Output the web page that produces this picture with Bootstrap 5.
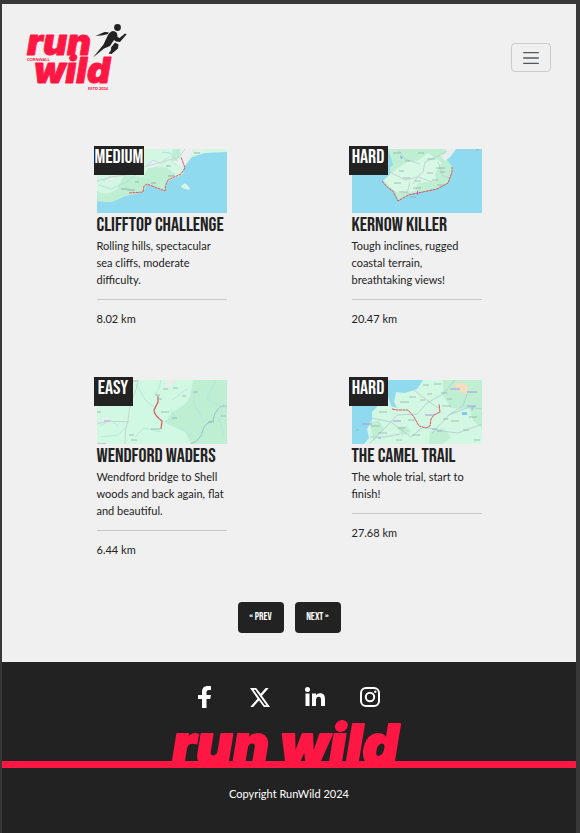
<!DOCTYPE html>
<html lang="en">
<head>
<meta charset="utf-8">
<meta name="viewport" content="width=device-width, initial-scale=1">
<title>Run Wild Cornwall</title>
<link href="https://cdn.jsdelivr.net/npm/bootstrap@5.3.0/dist/css/bootstrap.min.css" rel="stylesheet">
<style>
:root { --ink: #222; --pink: #ff1744; --paper: #f0f0f0; }
body { font-family: Lato, sans-serif; font-size: 11px; line-height: 17px; color: var(--ink); background: #383838; }
.frame { min-height: 100vh; padding: 4px 4px 4px 2px; }
.sheet { background: var(--paper); }
.site-nav { padding: 16px 25px 20px 23px; }
.navbar-brand svg { display: block; overflow: visible; }
.navbar-toggler { width: 40px; height: 29px; padding: 0; border-radius: 4px; line-height: 1; }
.navbar-toggler-icon { width: 20px; height: 20px; }
.heavy { font-family: Inter, sans-serif; font-weight: 900; font-style: italic; fill: var(--pink); stroke: var(--pink); stroke-linejoin: round; }
.micro { font-family: Lato, sans-serif; font-weight: 900; fill: var(--pink); font-size: 4px; }
.poster { font-family: "Bebas Neue", "Roboto Condensed", "Liberation Sans", sans-serif; font-weight: 500; }
.routes { padding: 35px 32px 0; row-gap: 53px; }
.route { width: 130px; }
.route h2 { font-size: 20px; line-height: 24px; margin: 0; white-space: nowrap; }
.route p { margin: 0; }
.route hr { margin: 11px 0 10px; opacity: .2; }
.route-map { display: block; width: 100%; height: auto; }
.level { position: absolute; left: -3px; top: -3px; height: 29px; min-width: 39px; padding: 0 1px; text-align: center; background: var(--ink); color: #fff; font-size: 20px; line-height: 23px; }
.pager { padding: 44px 0 29px; gap: 11px; }
.pager .btn { width: 46px; height: 31px; padding: 0; font-size: 11px; background: var(--ink); color: #fff; border-radius: 4px; }
.site-foot { background: var(--ink); color: #fff; }
.socials { padding: 22px 4px 12px 0; gap: 31px; }
.socials a { color: #fff; width: 24px; height: 26px; display: grid; place-items: center; }
.wordmark { border-bottom: 7px solid var(--pink); }
.wordmark svg { display: block; overflow: visible; }
.copy { padding: 17px 0 35px; margin: 0; }
</style>
<script src="https://cdn.jsdelivr.net/npm/bootstrap@5.3.0/dist/js/bootstrap.bundle.min.js"></script>
</head>
<body>
<div class="frame">
<div class="sheet">
<header>
<nav class="navbar site-nav d-flex justify-content-between align-items-center" aria-label="Main">
  <a class="navbar-brand p-0 m-0" href="#" aria-label="Run Wild Cornwall home">
    <svg width="104" height="74" viewBox="25 20 104 74">
      <text class="heavy" x="27" y="55" font-size="37" stroke-width="1">run</text>
      <text class="heavy" x="34" y="83" font-size="36" stroke-width="1">wild</text>
      <text class="micro" x="27" y="61">CORNWALL</text>
      <text class="micro" x="88" y="90">ESTD 2024</text>
      <g fill="#222">
        <circle cx="117.500" cy="27.500" r="3.400"/>
        <path d="M95.500 36l9-4 4 .3-.5 1.700-5 1.300zM93 57.500l10.500-13 4-8.500c1-3 3.500-5 6.500-5l3 2 .5 4 2 1 5.500-4.500 1.700.7-6.700 7.800-4-.5-2-1.500-4 6-6 2.500zM115 42.500l3.500 2-.5 4-6.500 5.500-3-.5c2-2 3-3.500 2.500-6z"/>
      </g>
    </svg>
  </a>
  <button class="navbar-toggler" type="button" aria-label="Toggle navigation"><span class="navbar-toggler-icon"></span></button>
</nav>
</header>
<main>
<div class="row g-0 routes">
  <div class="col-6 d-flex justify-content-center"><article class="route position-relative">
    <svg class="route-map" viewBox="0 0 130 64" role="img" aria-label="Clifftop Challenge map">
      <rect width="130" height="64" fill="#8fdaee"/>
      <path fill="#d3f7e2" d="M0 0H130V3L108 4 95 8 87 18 86 25 70 33 68 42 50 35 46 43 28 47 15 53 0 52z"/>
      <path fill="#bfefd2" d="M0 42Q9 48 20 40L27 26 46 28 53 16 70 19 79 25 70 33 68 42 50 35 46 43 28 47 15 53 0 52zM76 0H82L80 17 74 13z"/>
      <path fill="#eceff0" d="M85 0h10l-1 8-7 10-12-5 9-3zM98 1l8 0-6 5zM47 18l11-7 5 5-9 3zM13 27l3 0v4h-3z"/>
      <path fill="#d3f7e2" d="M84 37l4-3 5 5-1 2-7-2z"/>
      <g fill="none" stroke="#a9d9df" stroke-width=".8"><path d="M50 16l6-5 8 3 8-6M65 3l8 1 7 8M82 0v9M2 36l12 4 15-7 12-9M29 38l8 5M6 32l8-5"/></g>
      <path d="M0 32l14-4 15-2 17-8 16-4 20-6 6-8" fill="none" stroke="#ccd6d5"/>
      <path d="M32 44l14-1 1-6 3-2 18 7 1-7 2-4 13-6 4-6-4-11" fill="none" stroke="#dd5660" stroke-dasharray="3 .5"/>
      <path d="M30 41h8M54 34h5M38 33h4M71 27h7M69 17h5M97 4h6M24 40h6" stroke="#7d979b" stroke-width=".7"/>
    </svg>
    <span class="level poster">MEDIUM</span>
    <h2 class="poster">CLIFFTOP CHALLENGE</h2>
    <p>Rolling hills, spectacular sea cliffs, moderate difficulty.</p><hr><p>8.02 km</p>
  </article></div>
  <div class="col-6 d-flex justify-content-center"><article class="route position-relative">
    <svg class="route-map" viewBox="0 0 130 64" role="img" aria-label="Kernow Killer map">
      <rect width="130" height="64" fill="#8fdaee"/>
      <path fill="#bfefd2" d="M36 0H104L98 8 94 10 100 17 101 22 96 34 85 40 56 46 46 52 41 42 35 38 31 32 38 25 38 18 41 16z"/>
      <path fill="#d6f8e5" d="M32 31l11-10 12-8 10-1 11-8 14 10-7 10 1 8-18 2-3 8-17 2-8-6z"/>
      <path fill="#e8eeee" d="M94 0h10l-6 8-5 4-5-6 5-1z"/>
      <g fill="none" stroke="#bdcbd2" stroke-width=".8"><path d="M61 35l5-8 5-4 2-10 15-7 7-4M38 23l15 8 13-3 14 5M47 2l6 8 15 5M86 13l5 14 9 2M55 45l3-12"/></g>
      <path d="M30 32l5 6 6 4 5 10 10-6 29-6 11-6 4-11 0-5" fill="none" stroke="#d45465" stroke-dasharray="3 .5"/>
      <path d="M41 4h8M53 12h5M66 4h6M75 10h8M84 19h9M75 24h6M47 22h5M42 34h7M51 29h7M63 32h6M61 39h8M80 31h6M85 36h9M88 23h5M124 1h3M47 43h8M58 48h6" stroke="#91a8a5" stroke-width=".7"/>
      <path d="M65 42h1v4h-1z" fill="#cf55cf"/><path d="M48 6l3 3-2 1z" fill="#6faee9"/>
    </svg>
    <span class="level poster">HARD</span>
    <h2 class="poster">KERNOW KILLER</h2>
    <p>Tough inclines, rugged coastal terrain, breathtaking views!</p><hr><p>20.47 km</p>
  </article></div>
  <div class="col-6 d-flex justify-content-center"><article class="route position-relative">
    <svg class="route-map" viewBox="0 0 130 64" role="img" aria-label="Wendford Waders map">
      <rect width="130" height="64" fill="#d1f8e2"/>
      <path fill="#bfefd2" d="M96 0H130V64H94L88 52 68 43 75 32 87 25 93 17z"/>
      <g fill="none" stroke="#ade3df" stroke-width=".8"><path d="M39 4l10 17 11 8M64 0l-2 8-4 7M75 20l15-11M67 42l12-4-6-8M3 46l10-6 8 6M100 8l-4 14 10 17M119 0l-9 19 20 10M3 57l18-2 9-9M38 57l9-9 17 4M83 48l11 8M127 22l-5 17 5 15"/></g>
      <path d="M41 0q-1 9-4 15-5 10-6 26-3 5-3 23M0 44l10-3 22 1" fill="none" stroke="#c6d5d1"/>
      <path d="M94 64q10-4 12-14 2-7 10-9 1-8 5-12 3-4 9-3" fill="none" stroke="#9dbdce"/>
      <path d="M61 16v6l-4 8q0 5 8 11l-1 8" fill="none" stroke="#d85760" stroke-width="1.200"/>
      <path d="M58 15h5M60 19h5M66 9h5M76 8h5M85 16h4M64 32h8M75 38h5M54 49h9M34 60h6M96 12h5M32 55h5M0 32h4M111 42h6M124 36h5M36 1h4" stroke="#87aaa1" stroke-width=".7"/>
      <path d="M67 5l4-5h5l2 3-7 4zM5 38h8v4H5z" fill="#e9edec"/><path d="M7 41h6M0 64h9" stroke="#bc91df"/>
    </svg>
    <span class="level poster">EASY</span>
    <h2 class="poster">WENDFORD WADERS</h2>
    <p>Wendford bridge to Shell woods and back again, flat and beautiful.</p><hr><p>6.44 km</p>
  </article></div>
  <div class="col-6 d-flex justify-content-center"><article class="route position-relative">
    <svg class="route-map" viewBox="0 0 130 64" role="img" aria-label="The Camel Trail map">
      <rect width="130" height="64" fill="#d2f7e2"/>
      <path fill="#8fdaee" d="M0 0H71L65 9 53 13 44 12 42 22 45 28 39 26 35 13 24 28 20 32 20 40 15 49 17 58 12 64H0z"/>
      <path fill="#bfefd2" d="M91 0H130V48L121 41 118 29 99 28 91 16zM17 43l10-3 5 9-10 12zM45 47l9-1 5 5-9 5zM78 52l13-4 8 9-8 7H77z"/>
      <path fill="#f2dec3" d="M103 5l5-3 7 2 1 8-3 2-10-5z"/>
      <g fill="none" stroke="#b0c8d3" stroke-width=".8"><path d="M18 63l17-17 10-11 20-1 10-11 16-9 12-14M80 53l18-19 13-8 4-12M20 38l19 4 20 15 12-10M58 7l18 14 12 8M72 47l18 4 16 2 24-9M97 35l20-8 13 2M18 57l14 0 16-3"/></g>
      <path d="M40 29l5 1 11 0 6 7 5 9 7 2 4-2 1-7 3-4 6-3-1-8" fill="none" stroke="#df5158" stroke-dasharray="3 .5"/>
      <path d="M71 5h6M82 4h7M75 14h5M57 17h7M68 20h5M48 22h9M27 32h8M19 46h9M26 53h9M44 60h6M46 48h7M56 40h8M90 26h9M91 39h5M99 41h8M111 50h6M122 60h6M60 55h8M80 49h5M85 51h5M89 13h6M95 19h5M117 37h8M4 50h3" stroke="#8caba4" stroke-width=".7"/>
      <path d="M41 41h8M98 9h10M115 12h10M115 26h9M10 44h10M73 35h9M26 58h3" stroke="#b094e1"/>
      <path d="M110 32h5v3h-5zM119 28l3-2-2 5z" fill="#83c8ef"/>
    </svg>
    <span class="level poster">HARD</span>
    <h2 class="poster">THE CAMEL TRAIL</h2>
    <p>The whole trial, start to finish!</p><hr><p>27.68 km</p>
  </article></div>
</div>
<div class="pager d-flex justify-content-center">
  <button type="button" class="btn poster">« PREV</button>
  <button type="button" class="btn poster">NEXT »</button>
</div>
</main>
<footer class="site-foot text-center">
  <div class="socials d-flex justify-content-center">
    <a href="#" aria-label="Facebook"><svg width="14" height="22" viewBox="0 0 14 22" fill="currentColor"><path d="M4 22V13H0V9h4V6c0-4 2-6 6-6 1.500 0 2.500.1 3 .2V4h-2C9 4 8.500 5 8.500 6.500V9H13l-.8 4H8.500v9z"/></svg></a>
    <a href="#" aria-label="X"><svg width="20" height="19" viewBox="0 0 20 19"><path fill="currentColor" fill-rule="evenodd" d="M0 0h6.200l4.400 5.800L15.700 0h3L12 7.700 20 19h-6.200L9 12.400 3.200 19h-3l7.300-8.300zM3.500 1.700 14.700 17.200h1.700L5.300 1.700z"/></svg></a>
    <a href="#" aria-label="LinkedIn"><svg width="20" height="20" viewBox="0 0 20 20" fill="currentColor"><circle cx="2.500" cy="2.500" r="2.500"/><path d="M.5 6.500h4V19h-4zM7 6.500h4v1.700c.8-1.300 2-2 4-2 4 0 5 2.600 5 6V19h-4v-6c0-2-.3-3.300-2.200-3.300S11 11 11 13v6H7z"/></svg></a>
    <a href="#" aria-label="Instagram"><svg width="20" height="20" viewBox="0 0 20 20" fill="none" stroke="currentColor" stroke-width="2"><rect x="1" y="1" width="18" height="18" rx="5"/><circle cx="10" cy="10" r="4.200"/><circle cx="15.300" cy="4.700" r="1.200" fill="currentColor" stroke="none"/></svg></a>
  </div>
  <div class="wordmark d-flex justify-content-center">
    <svg width="240" height="39" viewBox="0 0 240 39"><text class="heavy" x="3" y="43" font-size="56" stroke-width="2">run wild</text></svg>
  </div>
  <p class="copy">Copyright RunWild 2024</p>
</footer>
</div>
</div>
</body>
</html>
